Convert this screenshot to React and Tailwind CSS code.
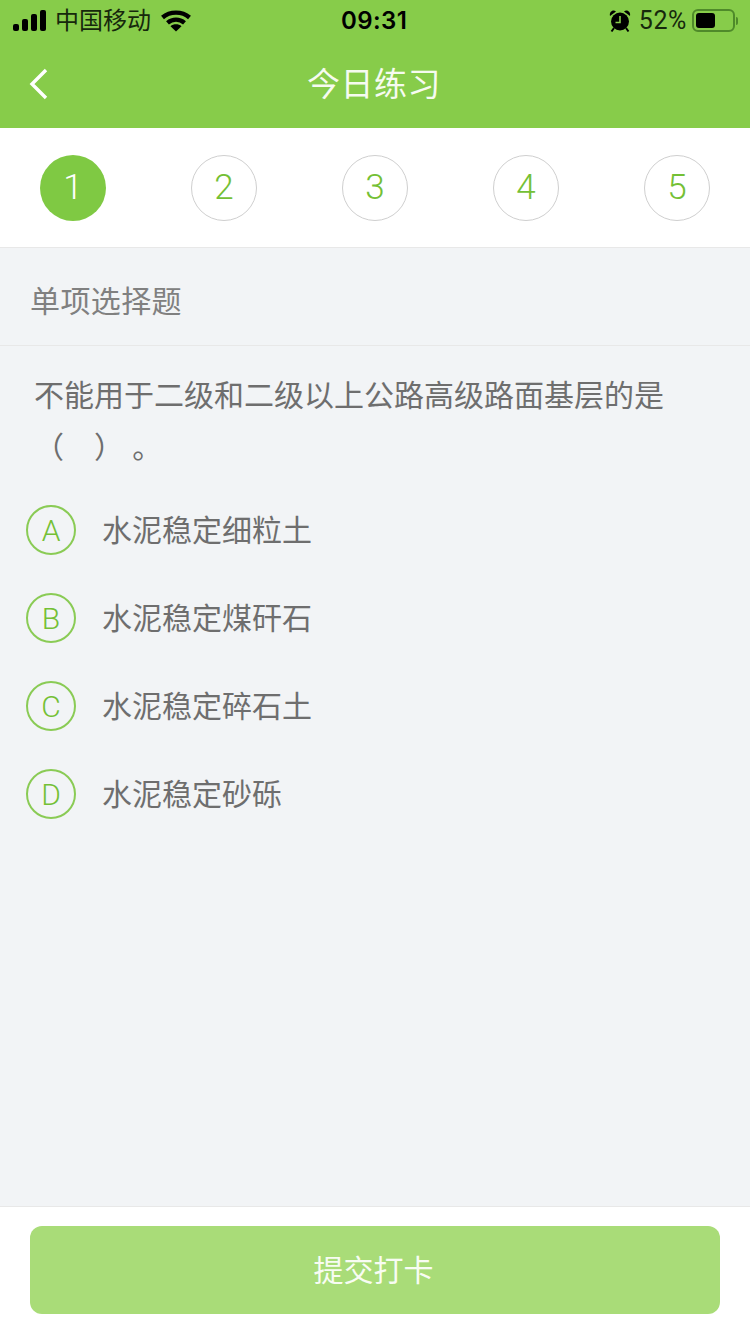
import React from 'react';

const steps = [1, 2, 3, 4, 5];
const options = [
  { key: 'A', text: '水泥稳定细粒土' },
  { key: 'B', text: '水泥稳定煤矸石' },
  { key: 'C', text: '水泥稳定碎石土' },
  { key: 'D', text: '水泥稳定砂砾' },
];

function StatusBar() {
  return (
    <div className="h-10 flex items-center justify-between text-[24px] text-[#16280c] relative">
      <div className="flex items-center pl-[13px] pt-[1px]">
        <svg width="34" height="22" viewBox="0 0 34 22" fill="#000">
          <rect x="0" y="14" width="6" height="7" rx="2" />
          <rect x="9" y="9" width="6" height="12" rx="2" />
          <rect x="18" y="4" width="6" height="17" rx="2" />
          <rect x="27" y="0" width="6" height="21" rx="2" />
        </svg>
        <span className="ml-2 leading-none">中国移动</span>
        <svg className="ml-[10px]" width="30" height="22" viewBox="0 0 30 22" fill="none" stroke="#000" strokeWidth="4.4">
          <path d="M1.5 7.5C9 1 21 1 28.5 7.5" />
          <path d="M6.5 12.8C11.5 8.5 18.5 8.5 23.5 12.8" />
          <path d="M15 21.5L9.5 16.2C12.5 13.6 17.5 13.6 20.5 16.2Z" fill="#000" stroke="none" />
        </svg>
      </div>
      <span className="absolute left-[341px] top-[6px] font-semibold text-black tracking-[0.4px] font-['Inter',sans-serif] leading-[30px]">09:31</span>
      <div className="flex items-center pr-[12px] pt-[1px]">
        <svg width="22" height="24" viewBox="0 0 22 24" fill="#000">
          <circle cx="11" cy="12.5" r="9" />
          <path d="M1 7C0 3 4 0 7 2.5ZM21 7C22 3 18 0 15 2.5Z" />
          <path d="M5 19l-2.5 3.5M17 19l2.5 3.5" stroke="#000" strokeWidth="2" />
          <path d="M11 7v6.5H6.5" stroke="#87cc4a" strokeWidth="1.6" fill="none" />
        </svg>
        <span className="ml-[8px] text-[25px] leading-none font-['Roboto',sans-serif] tracking-[0.6px]">52%</span>
        <div className="ml-[5px] w-[43px] h-[23px] rounded-[6px] border-2 border-[#4f8a2a] p-[2px]">
          <div className="w-[19px] h-full rounded-[3px] bg-black" />
        </div>
        <div className="ml-[1px] w-[2px] h-[8px] rounded-r bg-[#4f8a2a]" />
      </div>
    </div>
  );
}

function NavBar() {
  return (
    <div className="h-[88px] flex items-center justify-center relative">
      <svg className="absolute left-[29px] top-[27px]" width="20" height="34" viewBox="0 0 20 34" fill="none" stroke="#fff" strokeWidth="3.4">
        <path d="M17 3L3 17L17 31" />
      </svg>
      <span className="text-[33px] text-[#f6fbf0] leading-none tracking-[0.5px] mr-[2px]">今日练习</span>
    </div>
  );
}

export default function App() {
  return (
    <div className="w-[750px] h-[1334px] flex flex-col bg-[#f2f4f6] font-['Liberation_Sans','Noto_Sans_CJK_SC',sans-serif] overflow-hidden">
      <div className="bg-[#87cc4a]">
        <StatusBar />
        <NavBar />
      </div>

      <div className="h-[120px] bg-white border-b border-[#e8e8e8] flex justify-between px-10 pt-[27px]">
        {steps.map((n) => (
          <div
            key={n}
            className={`w-[66px] h-[66px] rounded-full flex items-center justify-center pt-[1px] text-[35px] font-light font-['Roboto',sans-serif] ${n === 1 ? 'bg-[#7fc943] text-white' : 'border border-[#cfcfcf] text-[#74c035]'}`}
          >
            {n}
          </div>
        ))}
      </div>

      <div className="h-[98px] border-b border-[#e8e8e8] flex items-center pl-[30px] pt-[10px] text-[30px] tracking-[0.4px] text-[#808080]">
        单项选择题
      </div>

      <div className="pl-[34px] pr-[80px] pt-6 text-[30px] leading-[52px] text-[#6e6e6e]">
        不能用于二级和二级以上公路高级路面基层的是（　） 。
      </div>

      <div className="flex flex-col gap-[38px] pl-[26px] mt-[31px]">
        {options.map((o) => (
          <div key={o.key} className="flex items-center">
            <div className="w-[50px] h-[50px] rounded-full border-2 border-[#8acb55] flex items-center justify-center text-[30px] font-light font-['Roboto',sans-serif] text-[#74c035]">
              {o.key}
            </div>
            <span className="ml-[26px] text-[30px] text-[#6e6e6e]">{o.text}</span>
          </div>
        ))}
      </div>

      <div className="mt-auto h-[128px] bg-white border-t border-[#e8e8e8] px-[30px] pt-[19px]">
        <button className="w-full h-[88px] rounded-[12px] bg-[#a9dc78] text-[#f8fcf3] text-[30px] pr-[3px]">提交打卡</button>
      </div>
    </div>
  );
}
